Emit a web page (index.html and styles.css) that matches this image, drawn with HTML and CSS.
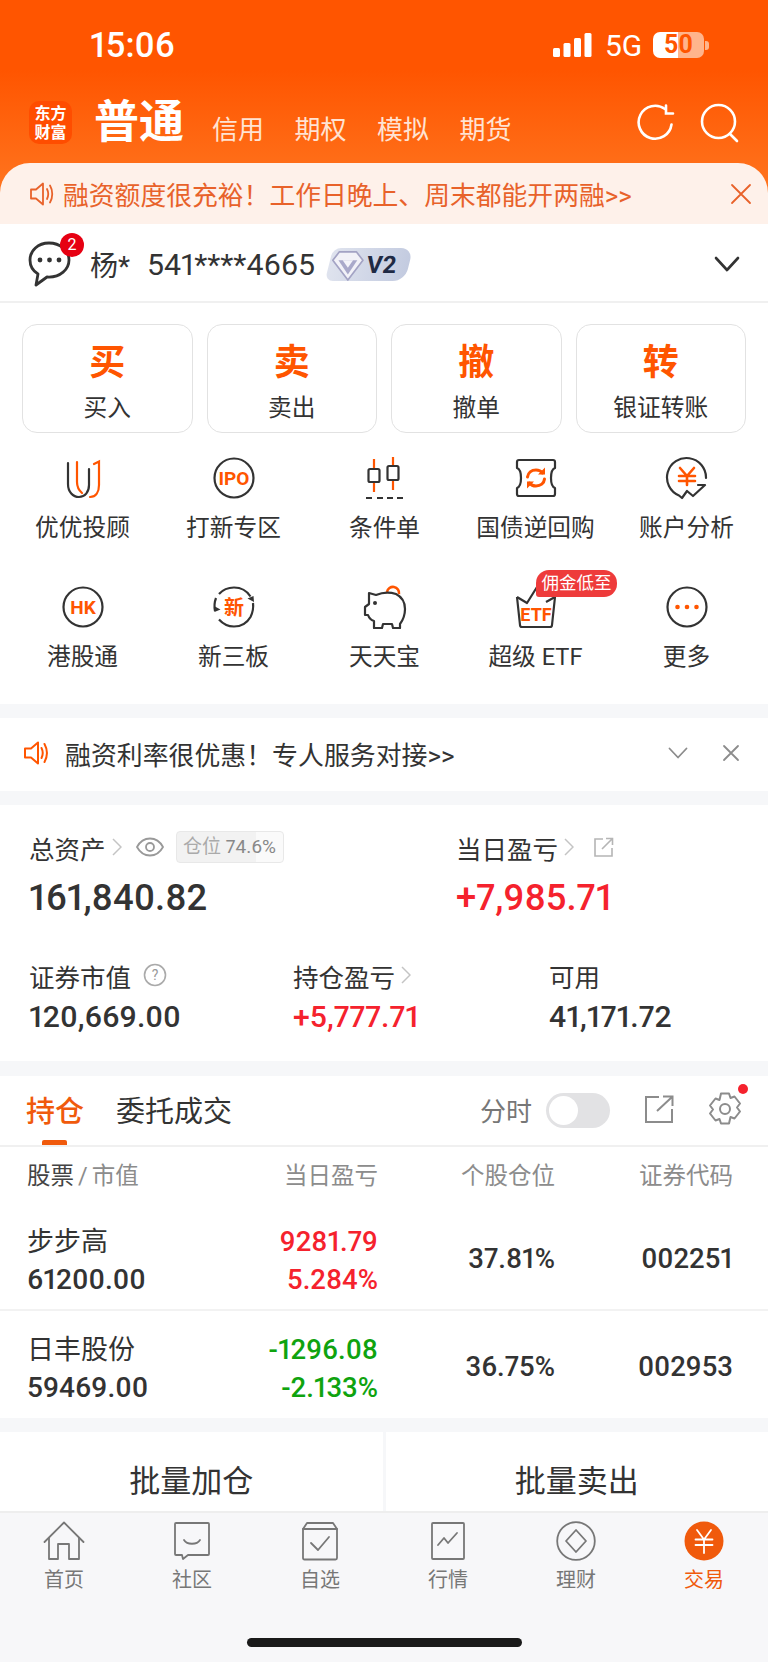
FILE: index.html
```html
<!DOCTYPE html>
<html lang="zh-CN">
<head>
    <meta charset="UTF-8">
    <meta name="viewport" content="width=device-width, initial-scale=1.0">
    <title>交易</title>
    <link rel="stylesheet" href="styles.css">
</head>
<body>
<div class="screen">

    <header class="top">
        <div class="status">
            <span class="clock">15:06</span>
            <div class="status-right">
                <svg class="signal" width="40" height="26" viewBox="0 0 40 26"><rect x="0" y="16" width="7" height="9" rx="1.5"/><rect x="10.500" y="11" width="7" height="14" rx="1.5"/><rect x="21" y="6" width="7" height="19" rx="1.5"/><rect x="31.500" y="1" width="7" height="24" rx="1.5"/></svg>
                <span class="net">5G</span>
                <span class="battery">50</span>
                <span class="battery-nub"></span>
            </div>
        </div>
        <nav class="account-nav">
            <div class="logo"><span>东方</span><span>财富</span></div>
            <span class="nav-active">普通</span>
            <span class="nav-item">信用</span>
            <span class="nav-item">期权</span>
            <span class="nav-item">模拟</span>
            <span class="nav-item">期货</span>
            <div class="nav-icons">
                <svg width="38" height="38" viewBox="0 0 38 38" fill="none" stroke="#fff" stroke-width="2.600" stroke-linecap="round"><path d="M34.500 20.500A16.500 16.500 0 1 1 28 5"/><path d="M29 1.500V9.500H36"/></svg>
                <svg width="40" height="40" viewBox="0 0 40 40" fill="none" stroke="#fff" stroke-width="2.600" stroke-linecap="round"><circle cx="18.500" cy="18.500" r="16.500"/><path d="M30 31l7 7"/></svg>
            </div>
        </nav>
        <div class="notice">
            <svg width="25" height="26" viewBox="0 0 25 26" fill="none" stroke="#e8622a" stroke-width="1.800" stroke-linejoin="round" stroke-linecap="round"><path d="M2 8.500h5l7-6v21l-7-6H2z"/><path d="M18 8c1.500 3 1.500 7 0 10"/><path d="M21 4.500c3 5 3 12 0 17"/></svg>
            <span class="notice-text">融资额度很充裕！工作日晚上、周末都能开两融&gt;&gt;</span>
            <svg class="notice-close" width="22" height="22" viewBox="0 0 22 22" fill="none" stroke="#e8622a" stroke-width="1.800" stroke-linecap="round"><path d="M2 2l18 18M20 2L2 20"/></svg>
        </div>
    </header>

    <section class="user-row">
        <div class="chat">
            <svg width="46" height="54" viewBox="0 0 46 54" fill="none" stroke="#333" stroke-width="2.800" stroke-linejoin="round"><path d="M22 9C11 9 3 16.500 3 26c0 6 3 11 8 14l-2 11 11-8c1 .1 1.500.1 2 .1 11 0 20-7.500 20-17.100C42 16.500 33 9 22 9z"/><circle cx="13" cy="26" r="2.400" fill="#333" stroke="none"/><circle cx="22.500" cy="26" r="2.400" fill="#333" stroke="none"/><circle cx="32" cy="26" r="2.400" fill="#333" stroke="none"/></svg>
            <span class="chat-badge">2</span>
        </div>
        <span class="user-name">杨*</span>
        <span class="user-no">541****4665</span>
        <div class="level">
            <svg width="32" height="32" viewBox="0 0 34 34"><path d="M8 3h18l7 9-16 21L1 12z" fill="#f2f2f8" stroke="#a3a3c4" stroke-width="1.800" stroke-linejoin="round"/><path d="M7 12h20L17 27z" fill="#a9a9ca"/><path d="M11.500 12h11L17 20z" fill="#f4f4fa"/></svg>
            <span class="level-text">V2</span>
        </div>
        <svg class="user-arrow" width="26" height="16" viewBox="0 0 26 16" fill="none" stroke="#333" stroke-width="2.600" stroke-linecap="round" stroke-linejoin="round"><path d="M2 2l11 12L24 2"/></svg>
    </section>

    <section class="trade-buttons">
        <div class="trade-btn"><b>买</b><span>买入</span></div>
        <div class="trade-btn"><b>卖</b><span>卖出</span></div>
        <div class="trade-btn"><b>撤</b><span>撤单</span></div>
        <div class="trade-btn"><b>转</b><span>银证转账</span></div>
    </section>

    <section class="menu">
        <div class="menu-item">
            <svg width="44" height="44" viewBox="0 0 44 44" fill="none" stroke-width="2.200" stroke-linecap="round"><path d="M7 7v21c0 8 5 13 11 13s10-5 10-12V13" stroke="#333"/><path d="M16 6v20c0 5 1.500 8 5 11" stroke="#ff5500"/><path d="M29 41c6 0 9-5 9-12V5.500L33 8" stroke="#ff5500"/></svg>
            <span>优优投顾</span>
        </div>
        <div class="menu-item">
            <svg width="44" height="44" viewBox="0 0 44 44" fill="none"><circle cx="22" cy="22" r="19.500" stroke="#333" stroke-width="2.200"/><text class="icon-text" x="22" y="29" font-size="19">IPO</text></svg>
            <span>打新专区</span>
        </div>
        <div class="menu-item">
            <svg width="44" height="44" viewBox="0 0 44 44" fill="none" stroke-width="2.200"><path d="M11 3v10M11 26v10M30 1v9M30 24v10" stroke="#ff5500"/><rect x="5.500" y="13" width="11" height="13" rx="1.500" stroke="#333"/><rect x="24.500" y="10" width="11" height="14" rx="1.500" stroke="#333"/><path d="M3 42h6M14 42h6M24 42h6M34 42h6" stroke="#333" stroke-width="1.800"/></svg>
            <span>条件单</span>
        </div>
        <div class="menu-item">
            <svg width="44" height="44" viewBox="0 0 44 44" fill="none" stroke-width="2.200" stroke-linejoin="round"><path d="M5 4h34c1 0 2 1 2 2v6c-3 1-4 6-4 10s1 9 4 10v6c0 1-1 2-2 2H5c-1 0-2-1-2-2v-6c3-1 4-6 4-10S6 13 3 12V6c0-1 1-2 2-2z" stroke="#333"/><g stroke="#ff5500" stroke-width="3" stroke-linecap="round"><path d="M13.500 21c.5-4.500 4-7 8.500-7 3 0 5 1 6.500 3"/><path d="M30.500 23c-.5 4.500-4 7-8.500 7-3 0-5-1-6.500-3"/></g><path d="M31 11.500v7h-7zM13 32.500v-7h7z" fill="#ff5500"/></svg>
            <span>国债逆回购</span>
        </div>
        <div class="menu-item">
            <svg width="44" height="44" viewBox="0 0 44 44" fill="none" stroke-width="2.200" stroke-linejoin="round" stroke-linecap="round"><path d="M41 22A19.500 19.500 0 1 0 14 39.500l3 2.500 5-7 6 5 12-11h-7" stroke="#333"/><path d="M15 12l7 8 7-8M14 20h16M14 25h16M22 20v9" stroke="#ff5500" stroke-width="2.600"/></svg>
            <span>账户分析</span>
        </div>
        <div class="menu-item">
            <svg width="44" height="44" viewBox="0 0 44 44" fill="none"><circle cx="22" cy="22" r="19.500" stroke="#333" stroke-width="2.200"/><text class="icon-text" x="22" y="28.500" font-size="19">HK</text></svg>
            <span>港股通</span>
        </div>
        <div class="menu-item">
            <svg width="44" height="44" viewBox="0 0 44 44" fill="none" stroke="#333" stroke-width="2.200"><path d="M7 9c4-4.500 9-6.500 15-6.500 7 0 13 3.500 16.500 9"/><path d="M41 18c.5 4 0 9-2.500 14-3.500 6-9 9.500-16.500 9.500-6 0-11-2.500-15-7"/><path d="M3 26c-.8-4-.5-9 1-13"/><path d="M42 17l-6.500-3.500 6-2.500zM2 21l6.500 3.500-6 2.500z" fill="#333" stroke="none"/><text class="icon-text" x="22" y="30" font-size="20" stroke="none">新</text></svg>
            <span>新三板</span>
        </div>
        <div class="menu-item">
            <svg width="44" height="44" viewBox="0 0 44 44" fill="none" stroke="#333" stroke-width="2.200" stroke-linejoin="round"><path d="M24 7a6 6 0 0 1 12 2" stroke="#ff5500" stroke-width="2.600"/><path d="M6 8l7 2c7-3 14-3 20-1 6 3 9 9 9 15 0 6-2 11-5 15v4h-7l-1-4h-9l-1 4H11v-7c-3-1-5-3-6-6H2v-8l4-3c0-4 0-6 0-11z"/><circle cx="12" cy="18" r="2" fill="#333" stroke="none"/></svg>
            <span>天天宝</span>
        </div>
        <div class="menu-item">
            <svg width="44" height="44" viewBox="0 0 44 44" fill="none" stroke="#333" stroke-width="2.200" stroke-linejoin="round"><path d="M3 12l3 28c0 1 1 2 2 2h28c1 0 2-1 2-2l3-28"/><path d="M3 12l10 6 10-16M41 12l-9 5"/><rect x="8" y="20" width="28" height="17" fill="#fff" stroke="none"/><text class="icon-text" x="22" y="36" font-size="18" stroke="none">ETF</text></svg>
            <span>超级 ETF</span>
            <em class="menu-tag">佣金低至</em>
        </div>
        <div class="menu-item">
            <svg width="44" height="44" viewBox="0 0 44 44" fill="none"><circle cx="22" cy="22" r="19.500" stroke="#333" stroke-width="2.200"/><circle cx="12.500" cy="22" r="2.300" fill="#ff5500"/><circle cx="22" cy="22" r="2.300" fill="#ff5500"/><circle cx="31.500" cy="22" r="2.300" fill="#ff5500"/></svg>
            <span>更多</span>
        </div>
    </section>

    <section class="promo">
        <svg width="26" height="26" viewBox="0 0 26 26" fill="none" stroke="#ff5500" stroke-width="2" stroke-linejoin="round" stroke-linecap="round"><path d="M2 8.500h6l7-6v21l-7-6H2z"/><path d="M18.500 8c1.500 3 1.500 7 0 10"/><path d="M21.500 4c3 5.500 3 12.500 0 18"/></svg>
        <span class="promo-text">融资利率很优惠！专人服务对接&gt;&gt;</span>
        <svg class="promo-down" width="20" height="12" viewBox="0 0 20 12" fill="none" stroke="#8c8c8c" stroke-width="1.800" stroke-linecap="round" stroke-linejoin="round"><path d="M1.500 1.500L10 10.500l8.500-9"/></svg>
        <svg class="promo-close" width="18" height="18" viewBox="0 0 18 18" fill="none" stroke="#8c8c8c" stroke-width="1.800" stroke-linecap="round"><path d="M2 2l14 14M16 2L2 16"/></svg>
    </section>

    <section class="assets">
        <div class="assets-top">
            <div class="asset-main">
                <div class="asset-label">
                    总资产
                    <svg class="more" width="10" height="20" viewBox="0 0 10 20" fill="none" stroke="#c4c4c4" stroke-width="1.500"><path d="M1 2l8 8-8 8"/></svg>
                    <svg class="eye" width="28" height="20" viewBox="0 0 28 20" fill="none" stroke="#999" stroke-width="1.800"><path d="M1 10c3-5.500 8-8.500 13-8.500S24 4.500 27 10c-3 5.500-8 8.500-13 8.500S4 15.500 1 10z"/><circle cx="14" cy="10" r="4"/></svg>
                    <span class="chip"><i>仓位</i> 74.6%</span>
                </div>
                <div class="asset-big">161,840.82</div>
            </div>
            <div class="asset-main">
                <div class="asset-label">
                    当日盈亏
                    <svg class="more" width="10" height="20" viewBox="0 0 10 20" fill="none" stroke="#c4c4c4" stroke-width="1.500"><path d="M1 2l8 8-8 8"/></svg>
                    <svg class="share-small" width="21" height="21" viewBox="0 0 21 21" fill="none" stroke="#b5b5b5" stroke-width="1.600"><path d="M10 2H2v17h17v-8"/><path d="M9 12L19 2M13 1.500h6.500V8"/></svg>
                </div>
                <div class="asset-big red">+7,985.71</div>
            </div>
        </div>
        <div class="assets-bottom">
            <div>
                <div class="asset-label">
                    证券市值
                    <svg class="help" width="24" height="24" viewBox="0 0 24 24" fill="none"><circle cx="12" cy="12" r="10.500" stroke="#aaa" stroke-width="1.600"/><text x="12" y="17" text-anchor="middle" font-size="14" fill="#999" font-family="Roboto, sans-serif">?</text></svg>
                </div>
                <div class="asset-num">120,669.00</div>
            </div>
            <div>
                <div class="asset-label">
                    持仓盈亏
                    <svg class="more" width="10" height="20" viewBox="0 0 10 20" fill="none" stroke="#c4c4c4" stroke-width="1.500"><path d="M1 2l8 8-8 8"/></svg>
                </div>
                <div class="asset-num red">+5,777.71</div>
            </div>
            <div>
                <div class="asset-label">可用</div>
                <div class="asset-num">41,171.72</div>
            </div>
        </div>
    </section>

    <section class="holdings">
        <div class="tabs">
            <span class="tab tab-on">持仓</span>
            <span class="tab">委托成交</span>
            <span class="fenshi">分时</span>
            <span class="switch"><i></i></span>
            <svg class="tab-share" width="30" height="28" viewBox="0 0 30 28" fill="none" stroke="#8c8c8c" stroke-width="2"><path d="M15 2H2v25h26V14"/><path d="M13 16L28 2M19 1.500h9.500V11"/></svg>
            <div class="gear">
                <svg width="34" height="34" viewBox="0 0 34 34" fill="none" stroke="#8c8c8c" stroke-width="2" stroke-linejoin="round"><path d="M13 2h8l1.500 4.500 4-1.500 5.500 7-3 4 3 4-5.500 7-4-1.500L21 32h-8l-1.500-4.500-4 1.500L2 22l3-4-3-4 5.500-7 4 1.500z" transform="translate(0 -.5)"/><circle cx="17" cy="17" r="5"/></svg>
                <i></i>
            </div>
        </div>
        <div class="table-head">
            <span class="col-name"><b>股票</b><i>/</i>市值</span>
            <span>当日盈亏</span>
            <span>个股仓位</span>
            <span>证券代码</span>
        </div>
        <div class="stock">
            <div class="col-name"><div>步步高</div><div>61200.00</div></div>
            <div class="col-pl red"><div>9281.79</div><div>5.284%</div></div>
            <div class="col-val">37.81%</div>
            <div class="col-val">002251</div>
        </div>
        <div class="stock">
            <div class="col-name"><div>日丰股份</div><div>59469.00</div></div>
            <div class="col-pl green"><div>-1296.08</div><div>-2.133%</div></div>
            <div class="col-val">36.75%</div>
            <div class="col-val">002953</div>
        </div>
    </section>

    <section class="batch">
        <span>批量加仓</span>
        <span>批量卖出</span>
    </section>

    <footer class="tabbar">
        <div class="tabbar-item">
            <svg width="42" height="40" viewBox="0 0 42 40" fill="none" stroke="#777" stroke-width="1.800" stroke-linejoin="round" stroke-linecap="round"><path d="M1.500 21L21 1.500 40.500 21"/><path d="M6 17v21h9V23h11v15h10V17"/></svg>
            <span>首页</span>
        </div>
        <div class="tabbar-item">
            <svg width="36" height="40" viewBox="0 0 36 40" fill="none" stroke="#777" stroke-width="1.800" stroke-linejoin="round" stroke-linecap="round"><path d="M2 2h32c.5 0 1 .5 1 1v30c0 .5-.5 1-1 1H14l-5 4-1-4H2c-.5 0-1-.5-1-1V3c0-.5.500-1 1-1z"/><path d="M10 19c3 5 13 5 16 0"/></svg>
            <span>社区</span>
        </div>
        <div class="tabbar-item">
            <svg width="36" height="40" viewBox="0 0 36 40" fill="none" stroke="#777" stroke-width="1.800" stroke-linejoin="round" stroke-linecap="round"><path d="M1 8l4-6h26l4 6v29c0 1-.5 1.500-1.500 1.500h-31C1.500 38.500 1 38 1 37z"/><path d="M1 8h34"/><path d="M9 22l7 7 11-13"/></svg>
            <span>自选</span>
        </div>
        <div class="tabbar-item">
            <svg width="34" height="38" viewBox="0 0 34 38" fill="none" stroke="#777" stroke-width="1.800" stroke-linejoin="round" stroke-linecap="round"><path d="M2 1h30c.5 0 1 .5 1 1v34c0 .5-.5 1-1 1H2c-.5 0-1-.5-1-1V2c0-.5.500-1 1-1z"/><path d="M7 23l6-7 4 5 9-10"/></svg>
            <span>行情</span>
        </div>
        <div class="tabbar-item">
            <svg width="40" height="40" viewBox="0 0 40 40" fill="none" stroke="#777" stroke-width="1.800" stroke-linejoin="round"><circle cx="20" cy="20" r="18.800"/><path d="M20 9l10 11-10 11-10-11z"/></svg>
            <span>理财</span>
        </div>
        <div class="tabbar-item tabbar-on">
            <svg width="40" height="40" viewBox="0 0 40 40" fill="none"><circle cx="20" cy="20" r="19.500" fill="#f05a0c"/><path d="M13 9l7 9.500L27 9M11.500 18.500h17M11.500 24h17M20 18.500V32" stroke="#fff" stroke-width="1.800" stroke-linecap="round"/></svg>
            <span>交易</span>
        </div>
        <div class="home-bar"></div>
    </footer>

</div>
</body>
</html>
```

FILE: styles.css
```css
* {
    box-sizing: border-box;
}

body {
    margin: 0;
    background-color: #ffffff;
    color: #333333;
    font-family: Roboto, "Noto Sans CJK SC", sans-serif;
    font-variant-numeric: proportional-nums;
}

.screen {
    width: 768px;
    height: 1662px;
    overflow: hidden;
    display: flex;
    flex-direction: column;
    background-color: #f6f7f9;
}

.red { color: #f5222d; }
.green { color: #0fa30f; }

/* top orange block */
.top {
    height: 224px;
    background: linear-gradient(180deg, #ff5500 0, #ff5500 70px, #ff7d27 224px);
}

.status {
    height: 90px;
    padding: 0 59px 0 90px;
    display: flex;
    justify-content: space-between;
    align-items: center;
    color: #ffffff;
}

.clock {
    font-size: 34.500px;
    font-weight: 500;
}

.status-right {
    display: flex;
    align-items: center;
}

.signal {
    fill: #ffffff;
    margin-right: 12px;
}

.net {
    font-size: 30px;
    margin-right: 12px;
    width: 36px;
}

.battery {
    width: 51px;
    height: 26px;
    border-radius: 7px;
    background: linear-gradient(90deg, #ffffff 0, #ffffff 25px, #ffb48c 25px);
    color: #ff5500;
    font-size: 25px;
    font-weight: 700;
    line-height: 26px;
    text-align: center;
}

.battery-nub {
    width: 4px;
    height: 9px;
    margin-left: 1px;
    border-radius: 0 3px 3px 0;
    background-color: #ffb48c;
}

.account-nav {
    height: 73px;
    padding: 0 28px 8px 29px;
    display: flex;
    align-items: center;
    color: #ffffff;
}

.logo {
    width: 43px;
    height: 43px;
    margin-right: 22px;
    border-radius: 10px;
    background-color: #ff4d00;
    display: flex;
    flex-direction: column;
    justify-content: center;
    align-items: center;
    font-size: 16px;
    font-weight: 700;
    line-height: 19px;
}

.nav-active {
    width: 90px;
    margin-right: 28px;
    font-size: 45px;
    font-weight: 700;
    line-height: 50px;
}

.nav-item {
    width: 52px;
    margin: 15px 30.500px 0 0;
    font-size: 26px;
    line-height: 30px;
    color: #ffe3d3;
}

.nav-icons {
    margin-left: auto;
    display: flex;
    align-items: center;
    gap: 25px;
}

.notice {
    height: 61px;
    padding: 0 16px 0 29px;
    border-radius: 30px 30px 0 0;
    background-color: #fef1ea;
    display: flex;
    align-items: center;
}

.notice-text {
    margin-left: 9px;
    font-size: 25.800px;
    color: #e8622a;
    white-space: nowrap;
}

.notice-close {
    margin-left: auto;
}

/* account line */
.user-row {
    height: 79px;
    padding: 3px 28px 0 27px;
    background-color: #ffffff;
    border-bottom: 2px solid #f0f0f0;
    display: flex;
    align-items: center;
}

.chat {
    position: relative;
    width: 46px;
    height: 54px;
    margin: -7px 17px 0 0;
}

.chat-badge {
    position: absolute;
    top: -1px;
    left: 33px;
    width: 24px;
    height: 24px;
    border-radius: 50%;
    background-color: #e60012;
    color: #ffffff;
    font-size: 16px;
    line-height: 24px;
    text-align: center;
}

.user-name {
    width: 57px;
    font-size: 28px;
}

.user-no {
    font-size: 30.300px;
    margin-right: 14px;
}

.level {
    width: 80px;
    height: 33px;
    padding-left: 3px;
    border-radius: 8px 12px 12px 8px;
    background: linear-gradient(90deg, #dfe3ee, #c3cbe0);
    transform: skewX(-14deg);
    display: flex;
    align-items: center;
}

.level svg {
    transform: skewX(14deg);
}

.level-text {
    margin-left: 3px;
    color: #1f2a44;
    font-size: 24px;
    font-weight: 700;
    transform: skewX(8deg);
}

.user-arrow {
    margin-left: auto;
}

/* buy / sell buttons */
.trade-buttons {
    padding: 21px 22px 0;
    background-color: #ffffff;
    display: flex;
    gap: 14px;
}

.trade-btn {
    flex: 1;
    height: 109px;
    border: 1.500px solid #e2e2e2;
    border-radius: 15px;
    display: flex;
    flex-direction: column;
    align-items: center;
}

.trade-btn b {
    margin-top: 14px;
    color: #ff5500;
    font-size: 36px;
    line-height: 48px;
}

.trade-btn span {
    margin-top: 5px;
    font-size: 23.700px;
    line-height: 32px;
}

/* icon menu */
.menu {
    height: 271px;
    padding: 23px 6px 0 7px;
    background-color: #ffffff;
    display: grid;
    grid-template-columns: repeat(5, 151px);
    grid-auto-rows: 129px;
}

.menu-item {
    position: relative;
    display: flex;
    flex-direction: column;
    align-items: center;
}

.menu-item span {
    margin-top: 13px;
    font-size: 23.700px;
    line-height: 30px;
    white-space: nowrap;
}

.icon-text {
    fill: #ff5500;
    font-family: Roboto, "Noto Sans CJK SC", sans-serif;
    font-weight: 700;
    text-anchor: middle;
}

.menu-tag {
    position: absolute;
    top: -15px;
    left: 76px;
    width: 81px;
    height: 27px;
    border-radius: 13px 13px 13px 3px;
    background-color: #ee3b3b;
    color: #ffffff;
    font-size: 17.500px;
    font-style: normal;
    line-height: 27px;
    text-align: center;
}

/* second notice */
.promo {
    height: 73px;
    margin-top: 14px;
    padding: 0 28px 3px 23px;
    background-color: #ffffff;
    display: flex;
    align-items: center;
}

.promo-text {
    margin-left: 16px;
    font-size: 25.900px;
}

.promo-down {
    margin-left: auto;
}

.promo-close {
    margin-left: 34px;
}

/* assets */
.assets {
    height: 256px;
    margin-top: 14px;
    padding: 26px 0 0 29px;
    background-color: #ffffff;
}

.assets-top {
    display: grid;
    grid-template-columns: 427px 1fr;
    height: 128px;
}

.assets-bottom {
    display: grid;
    grid-template-columns: 264px 256px 1fr;
}

.asset-label {
    height: 32px;
    display: flex;
    align-items: center;
    font-size: 25.500px;
    white-space: nowrap;
}

.more {
    margin-left: 6px;
}

.eye {
    margin-left: 14px;
}

.share-small {
    margin-left: 19px;
}

.help {
    margin-left: 12px;
}

.chip {
    width: 108px;
    height: 32px;
    margin-left: 12px;
    border: 1px solid #e8e8e8;
    border-radius: 4px;
    background: linear-gradient(90deg, #f2f2f2 0, #f2f2f2 75%, #fafafa 75%);
    color: #888888;
    font-size: 19px;
    line-height: 30px;
    text-align: center;
}

.chip i {
    font-style: normal;
    color: #aaaaaa;
}

.asset-big {
    margin-top: 13px;
    font-size: 36.400px;
    font-weight: 500;
    line-height: 44px;
}

.asset-num {
    margin-top: 7px;
    font-size: 30.200px;
    font-weight: 500;
    line-height: 38px;
}

/* holdings table */
.holdings {
    margin-top: 15px;
    background-color: #ffffff;
}

.tabs {
    height: 71px;
    padding: 0 26px 3px 26px;
    border-bottom: 2px solid #f0f0f0;
    display: flex;
    align-items: center;
}

.tab {
    position: relative;
    margin-right: 32px;
    font-size: 29px;
}

.tab-on {
    color: #f05a0c;
    font-weight: 500;
}

.tab-on::after {
    content: "";
    position: absolute;
    left: 16px;
    bottom: -15px;
    width: 25px;
    height: 5px;
    border-radius: 2px 2px 0 0;
    background-color: #f05a0c;
}

.fenshi {
    margin-left: auto;
    margin-right: 14px;
    font-size: 26px;
    color: #777777;
}

.switch {
    width: 64px;
    height: 35px;
    margin: 2px 34px 0 0;
    padding: 3px;
    border-radius: 18px;
    background-color: #e2e2e4;
}

.switch i {
    display: block;
    width: 29px;
    height: 29px;
    border-radius: 50%;
    background-color: #ffffff;
}

.gear {
    position: relative;
    width: 34px;
    height: 34px;
    margin-left: 34px;
}

.gear i {
    position: absolute;
    top: -8px;
    right: -6px;
    width: 10px;
    height: 10px;
    border-radius: 50%;
    background-color: #f5222d;
}

.table-head,
.stock {
    padding: 0 35px 0 27px;
    display: grid;
    grid-template-columns: 151px 200px 177px 178px;
    text-align: right;
}

.table-head {
    height: 57px;
    padding-bottom: 4px;
    align-items: center;
    font-size: 23.500px;
    color: #8c8c8c;
}

.table-head b {
    font-weight: 400;
    color: #444444;
}

.table-head i {
    margin: 0 4px;
    font-style: normal;
}

.col-name {
    text-align: left;
    white-space: nowrap;
}

.stock {
    height: 107px;
    padding-top: 4px;
    border-bottom: 2px solid #f2f2f2;
    align-items: center;
    font-size: 27.500px;
    font-weight: 500;
}

.stock:last-child {
    border-bottom: 0;
}

.stock .col-name div:first-child {
    font-size: 27px;
    font-weight: 400;
}

.stock .col-name,
.col-pl {
    margin-top: 5px;
}

.stock .col-name div:last-child {
    font-size: 28px;
}

.col-name div,
.col-pl div {
    line-height: 38px;
}

/* batch buttons */
.batch {
    height: 79px;
    margin-top: 14px;
    display: grid;
    grid-template-columns: 1fr 1fr;
    gap: 3px;
}

.batch span {
    padding-top: 14px;
    background-color: #ffffff;
    font-size: 31px;
    display: flex;
    justify-content: center;
    align-items: center;
}

/* bottom tabs */
.tabbar {
    position: relative;
    flex: 1;
    padding-top: 8px;
    border-top: 2px solid #eeeeee;
    display: grid;
    grid-template-columns: repeat(6, 128px);
    align-items: start;
    background-color: #f7f7f9;
}

.tabbar-item {
    display: flex;
    flex-direction: column;
    align-items: center;
    color: #777777;
    font-size: 20px;
    line-height: 28px;
}

.tabbar-item svg {
    height: 40px;
}

.tabbar-item span {
    margin-top: 5px;
}

.tabbar-on {
    color: #f05a0c;
}

.home-bar {
    position: absolute;
    left: 247px;
    bottom: 15px;
    width: 275px;
    height: 9px;
    border-radius: 5px;
    background-color: #1a1a1a;
}
```
